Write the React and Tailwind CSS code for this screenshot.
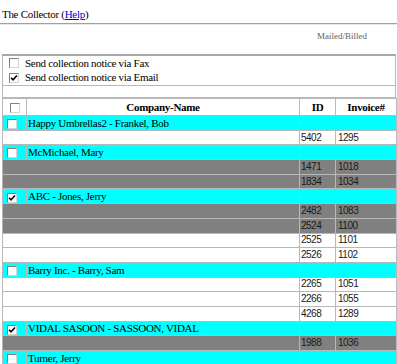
import React from 'react';

const groups = [
  { name: 'Happy Umbrellas2 - Frankel, Bob', checked: false, items: [['5402', '1295', 'w']] },
  { name: 'McMichael, Mary', checked: false, items: [['1471', '1018', 'g'], ['1834', '1034', 'g']] },
  {
    name: 'ABC - Jones, Jerry',
    checked: true,
    items: [['2482', '1083', 'g'], ['2524', '1100', 'g'], ['2525', '1101', 'w'], ['2526', '1102', 'w']],
  },
  {
    name: 'Barry Inc. - Barry, Sam',
    checked: false,
    items: [['2265', '1051', 'w'], ['2266', '1055', 'w'], ['4268', '1289', 'w']],
  },
  { name: 'VIDAL SASOON - SASSOON, VIDAL', checked: true, items: [['1988', '1036', 'g']] },
  { name: 'Turner, Jerry', checked: false, items: [] },
];

const Box = ({ checked }) => (
  <span className="inline-flex items-center justify-center w-[10px] h-[10px] bg-white border border-[#808080] border-b-[#d4d4d4] border-r-[#d4d4d4] align-middle">
    {checked && (
      <svg width="8" height="8" viewBox="0 0 8 8">
        <path d="M1 3.8 L3 5.8 L7 1.5" stroke="#000" strokeWidth="1.6" fill="none" />
      </svg>
    )}
  </span>
);

const App = () => {
  return (
    <div className="w-[397px] h-[364px] overflow-hidden bg-white text-[11px] tracking-[-0.3px] leading-[13px] text-black font-['Liberation_Serif',serif]">
      <div className="px-[2px] pt-[8px] h-[23px]">
        The Collector (<span className="text-[#0000ee] underline">Help</span>)
      </div>
      <div className="h-[2px] border-t border-[#a0a0a0] border-b border-b-[#e8e8e8]" />
      <div className="h-[29px] pl-[317px] pt-[6px] text-[9px] tracking-normal leading-[11px] text-[#606060]">
        Mailed/Billed
      </div>

      <table className="ml-[2px] w-[394px] border-collapse border-t-2 border-[#a8a8a8]">
        <tbody>
          <tr>
            <td className="border border-[#b8b8b8] border-t-2 border-t-[#a8a8a8] p-0 pl-[6px]">
              <div className="flex items-center gap-[6px] h-[14px]">
                <Box checked={false} />
                <span>Send collection notice via Fax</span>
              </div>
              <div className="flex items-center gap-[6px] h-[15px]">
                <Box checked={true} />
                <span>Send collection notice via Email</span>
              </div>
            </td>
          </tr>
          <tr>
            <td className="border border-[#b8b8b8] p-0">
              <div className="h-[11px]" />
            </td>
          </tr>
        </tbody>
      </table>

      <table className="ml-[2px] w-[394px] table-fixed border-collapse leading-[12px]">
        <colgroup>
          <col className="w-[24px]" />
          <col className="w-[273px]" />
          <col className="w-[36px]" />
          <col className="w-[61px]" />
        </colgroup>
        <tbody>
          <tr className="h-[17px]">
            <td className="border border-[#b8b8b8] text-center p-0">
              <Box checked={false} />
            </td>
            <td className="border border-[#b8b8b8] text-center font-bold p-0">Company-Name</td>
            <td className="border border-[#b8b8b8] text-center font-bold p-0">ID</td>
            <td className="border border-[#b8b8b8] text-center font-bold p-0">Invoice#</td>
          </tr>
          {groups.map((g) => (
            <React.Fragment key={g.name}>
              <tr className="h-[14.7px] bg-[#00ffff]">
                <td className="border border-[#b8b8b8] p-0 pl-[4px]">
                  <Box checked={g.checked} />
                </td>
                <td className="border border-[#b8b8b8] p-0 pl-[1px] whitespace-nowrap overflow-hidden">{g.name}</td>
                <td colSpan={2} className="border border-[#b8b8b8] p-0" />
              </tr>
              {g.items.map(([id, inv, c]) => (
                <tr
                  key={id}
                  className={`h-[14.7px] font-['Liberation_Sans',sans-serif] text-[10px] tracking-[-0.5px] leading-[12px] text-[#1a1a1a] ${
                    c === 'g' ? 'bg-[#808080]' : 'bg-white'
                  }`}
                >
                  <td colSpan={2} className="border border-[#b8b8b8] p-0" />
                  <td className="border border-[#b8b8b8] p-0 pl-[1px]">{id}</td>
                  <td className="border border-[#b8b8b8] p-0 pl-[2px]">{inv}</td>
                </tr>
              ))}
            </React.Fragment>
          ))}
        </tbody>
      </table>
    </div>
  );
};

export default App;
